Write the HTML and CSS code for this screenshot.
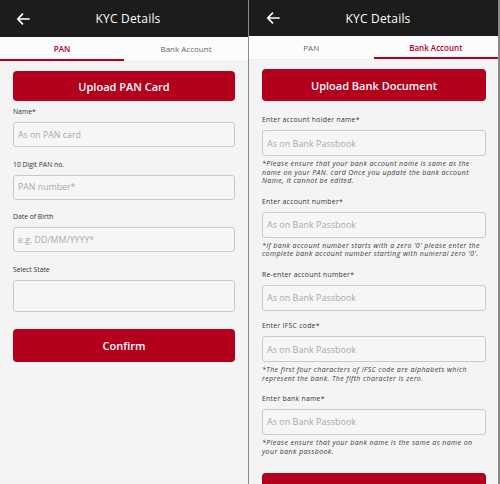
FILE: index.html
```html
<!DOCTYPE html>
<html>
<head>
<meta charset="utf-8">
<link rel="stylesheet" href="styles.css">
</head>
<body>
<div class="screens">
  <section class="panel panel-left">
    <header class="appbar">
      <svg class="back" viewBox="0 0 14 12" width="14" height="12"><path d="M13 6H2M6.5 1.2L1.7 6l4.8 4.8" fill="none" stroke="#fff" stroke-width="1.7" stroke-linecap="round" stroke-linejoin="round"/></svg>
      <h1 class="title">KYC Details</h1>
    </header>
    <nav class="tabs">
      <div class="tab active">PAN</div>
      <div class="tab">Bank Account</div>
    </nav>
    <main class="content">
      <button class="btn upload">Upload PAN Card</button>
      <div class="field">
        <label class="label">Name*</label>
        <div class="input">As on PAN card</div>
      </div>
      <div class="field">
        <label class="label">10 Digit PAN no.</label>
        <div class="input">PAN number*</div>
      </div>
      <div class="field">
        <label class="label">Date of Birth</label>
        <div class="input">e.g. DD/MM/YYYY*</div>
      </div>
      <div class="field">
        <label class="label">Select State</label>
        <div class="input tall"></div>
      </div>
      <button class="btn confirm">Confirm</button>
    </main>
  </section>
  <section class="panel panel-right">
    <header class="appbar">
      <svg class="back" viewBox="0 0 14 12" width="14" height="12"><path d="M13 6H2M6.5 1.2L1.7 6l4.8 4.8" fill="none" stroke="#fff" stroke-width="1.7" stroke-linecap="round" stroke-linejoin="round"/></svg>
      <h1 class="title">KYC Details</h1>
    </header>
    <nav class="tabs">
      <div class="tab">PAN</div>
      <div class="tab active">Bank Account</div>
    </nav>
    <main class="content">
      <button class="btn upload">Upload Bank Document</button>
      <div class="field">
        <label class="label">Enter account holder name*</label>
        <div class="input">As on Bank Passbook</div>
        <p class="note">*Please ensure that your bank account name is same as the<br>name on your PAN. card Once you update the bank account<br>Name, it cannot be edited.</p>
      </div>
      <div class="field">
        <label class="label">Enter account number*</label>
        <div class="input">As on Bank Passbook</div>
        <p class="note">*If bank account number starts with a zero '0' please enter the<br>complete bank account number starting with numeral zero '0'.</p>
      </div>
      <div class="field">
        <label class="label">Re-enter account number*</label>
        <div class="input">As on Bank Passbook</div>
      </div>
      <div class="field">
        <label class="label">Enter IFSC code*</label>
        <div class="input">As on Bank Passbook</div>
        <p class="note">*The first four characters of IFSC code are alphabets which<br>represent the bank. The fifth character is zero.</p>
      </div>
      <div class="field">
        <label class="label">Enter bank name*</label>
        <div class="input">As on Bank Passbook</div>
        <p class="note">*Please ensure that your bank name is the same as name on<br>your bank passbook.</p>
      </div>
      <button class="btn submit"></button>
    </main>
  </section>
</div>
</body>
</html>
```

FILE: styles.css
```css
* { box-sizing: border-box; }
html, body { margin: 0; padding: 0; }
body {
  width: 500px;
  height: 484px;
  overflow: hidden;
  background: #f4f4f4;
  font-family: "Open Sans", "Liberation Sans", sans-serif;
  color: #333;
}
.screens {
  display: flex;
  height: 484px;
}
.panel {
  background: #f4f4f4;
  display: flex;
  flex-direction: column;
  overflow: hidden;
}
.panel-left {
  width: 249px;
  border-right: 1px solid #8a8a8a;
}
.panel-right {
  width: 251px;
  border-right: 2px solid #8a8a8a;
}
.appbar {
  background: #1c1c1c;
  display: flex;
  align-items: center;
  justify-content: center;
  position: relative;
  flex: none;
  padding-left: 8px;
}
.panel-left .appbar { height: 37px; }
.panel-right .appbar { height: 36px; border-left: 1px solid #1c1c1c; }
.back {
  position: absolute;
  left: 16px;
  top: 50%;
  margin-top: -6px;
}
.title {
  margin: 0;
  color: #fff;
  font-size: 12px;
  font-weight: 500;
  letter-spacing: 0.2px;
}
.tabs {
  display: flex;
  background: #fcfcfc;
  flex: none;
  height: 25px;
  border-bottom: 1px solid #ececec;
}
.panel-right .tabs { height: 24px; }
.tab {
  flex: 1;
  display: flex;
  align-items: center;
  justify-content: center;
  font-size: 8px;
  color: #666;
  border-bottom: 2.5px solid transparent;
  padding-top: 1px;
}
.tab.active {
  color: #b4001c;
  font-weight: 600;
  border-bottom-color: #b4001c;
}
.content {
  display: flex;
  flex-direction: column;
  padding: 0 13px;
}
.panel-left .content { padding-top: 9px; }
.panel-right .content { padding-top: 9px; padding-right: 12px; }
.btn {
  border: none;
  background: #b4001c;
  color: #fff;
  border-radius: 4px;
  font-family: inherit;
  font-weight: 600;
  font-size: 11px;
  padding: 0;
  flex: none;
}
.upload { height: 30px; margin-bottom: 6px; }
.panel-right .upload { height: 32px; margin-bottom: 14px; }
.confirm { height: 33px; margin-top: 4px; }
.submit { height: 30px; margin-top: 6px; }
.field {
  display: flex;
  flex-direction: column;
  margin-bottom: 12.7px;
}
.panel-right .field { margin-bottom: 10.5px; }
.label {
  font-size: 6.8px;
  line-height: 10px;
  height: 10px;
  color: #333;
  margin-bottom: 5px;
}
.panel-right .label { letter-spacing: 0.3px; }
.input {
  height: 25px;
  border: 1px solid #c9c9c9;
  border-radius: 3px;
  background: #f6f6f6;
  color: #a9a9a9;
  font-size: 8.8px;
  display: flex;
  align-items: center;
  padding-left: 4px;
}
.panel-right .input { height: 26px; font-size: 9px; }
.input.tall { height: 32px; }
.note {
  margin: 4px 0 0;
  font-size: 7px;
  line-height: 8.7px;
  letter-spacing: 0.4px;
  font-style: italic;
  color: #3a3a3a;
  white-space: nowrap;
}
```
